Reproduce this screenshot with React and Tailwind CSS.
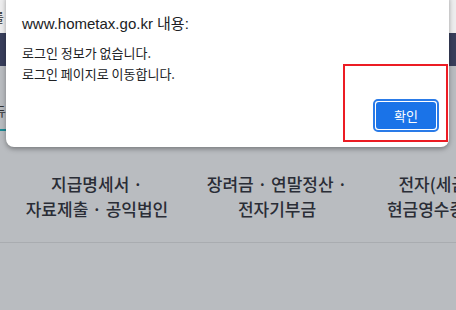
export default function App() {
  const kr = { fontFamily: '"Noto Sans CJK KR", "Noto Sans", sans-serif' };
  const mix = { fontFamily: '"Liberation Sans", "Noto Sans CJK KR", sans-serif' };
  return (
    <div className="relative w-[456px] h-[310px] overflow-hidden bg-[#b9bcc0]" style={kr}>
      {/* background page */}
      <div className="flex flex-col">
        <div className="h-[33px] bg-[#ededee] flex items-center pl-[0px] text-[13px] text-[#333] -ml-[8px]">를</div>
        <div className="h-[33px] bg-[#383e5b]" />
        <div className="h-[65px] flex items-end">
          <div className="-ml-[6px] w-[60px] h-[28px] border-b-2 border-[#1d8a95] text-[13px] text-[#333] pl-0 leading-[16px]">듀</div>
        </div>
        <div className="h-[112px] border-b border-[#a9acb0] flex pt-[40px] pl-[7px] text-[17px] leading-[25px] text-[#2a2d36] font-medium">
          <div className="w-[180px] shrink-0 text-center">
            <div>지급명세서 ·</div>
            <div>자료제출 · 공익법인</div>
          </div>
          <div className="w-[180px] shrink-0 text-center">
            <div>장려금 · 연말정산 ·</div>
            <div>전자기부금</div>
          </div>
          <div className="w-[180px] shrink-0 pl-[18px] text-center">
            <div>전자(세금)계산서 ·</div>
            <div>현금영수증 · 신용카드</div>
          </div>
        </div>
      </div>

      {/* dialog */}
      <div className="absolute left-[6px] top-[-8px] w-[443px] h-[155px] bg-white rounded-[8px] shadow-[0_2px_5px_rgba(0,0,0,0.35)]">
        <div className="pl-[16px] pt-[21px]">
          <div className="text-[15px] leading-[21px] text-[#202124]" style={mix}>www.hometax.go.kr 내용:</div>
          <div className="mt-[8px] text-[13px] leading-[21px] text-[#202124]" style={kr}>
            <div>로그인 정보가 없습니다.</div>
            <div>로그인 페이지로 이동합니다.</div>
          </div>
        </div>
        <div className="absolute left-[367px] top-[107px] w-[66px] h-[33px] rounded-[5px] border-2 border-[#2a7be8] bg-white p-[1px]">
          <div className="w-full h-full rounded-[3px] bg-[#1a73e8] flex items-center justify-center text-white text-[13px]" style={kr}>확인</div>
        </div>
      </div>

      {/* red annotation box */}
      <div className="absolute left-[343px] top-[64px] w-[105px] h-[78px] border-2 border-[#ec1c24]" />
    </div>
  );
}
